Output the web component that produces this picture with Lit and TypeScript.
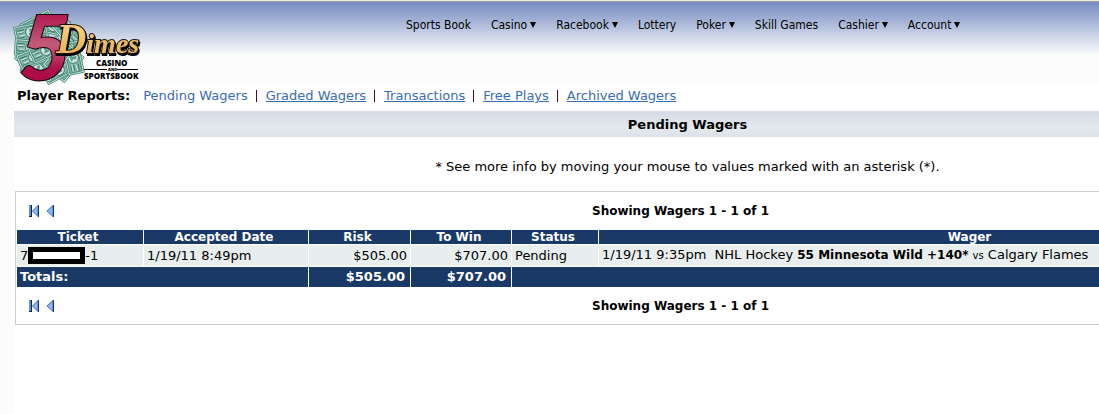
import { LitElement, html, css, svg } from "lit";
import { customElement } from "lit/decorators.js";

interface MenuEntry {
  label: string;
  menu: boolean;
}

interface ReportLink {
  label: string;
  current: boolean;
}

const MENU: MenuEntry[] = [
  { label: "Sports Book", menu: false },
  { label: "Casino", menu: true },
  { label: "Racebook", menu: true },
  { label: "Lottery", menu: false },
  { label: "Poker", menu: true },
  { label: "Skill Games", menu: false },
  { label: "Cashier", menu: true },
  { label: "Account", menu: true },
];

const REPORTS: ReportLink[] = [
  { label: "Pending Wagers", current: true },
  { label: "Graded Wagers", current: false },
  { label: "Transactions", current: false },
  { label: "Free Plays", current: false },
  { label: "Archived Wagers", current: false },
];

@customElement("site-logo")
export class SiteLogo extends LitElement {
  static styles = css`
    :host {
      display: block;
    }
    .logo {
      display: block;
      width: 128px;
      height: 72px;
      overflow: visible;
    }
    .five {
      font: italic 900 90px Lato, sans-serif;
    }
    .dimes {
      font: italic bold 28px "Liberation Serif", serif;
      filter: drop-shadow(1px 2px 0 #000);
    }
    .initial {
      font-size: 42px;
    }
    .caps {
      font: 800 8px "Open Sans", sans-serif;
    }
    .tiny {
      font: 800 4px "Open Sans", sans-serif;
    }
  `;

  private bill(x: number, y: number, angle: number) {
    return svg`<g transform="translate(${x} ${y}) rotate(${angle}) scale(0.9)">
      <rect x="-18" y="-9" width="36" height="18" fill="#d3e6de" stroke="#4c8f7f" stroke-width="1"/>
      <rect x="-16" y="-7" width="32" height="14" fill="#82b5a7" stroke="#3f8776" stroke-width="1"/>
      <path d="M-15 -4h8M-14 -1h6M-15 4h8M7 -4h8M8 1h6M7 4h8" stroke="#2f7565" stroke-width="1"/>
      <path d="M-15 -2h7M-13 2h6M8 -2h7M7 3h8" stroke="#d9ebe4" stroke-width="1"/>
      <ellipse rx="6" ry="6" fill="#cfe3dc" stroke="#357c6c" stroke-width="1"/>
      <path d="M-3 3q0-3 2-3q-2-4 1-4q3 0 1 4q2 0 2 3z" fill="#5b9a8b"/>
    </g>`;
  }

  render() {
    return html`<svg class="logo" viewBox="0 0 128 72" role="img" aria-label="5 Dimes Casino and Sportsbook">
      <defs>
        <linearGradient id="red" x1="0" y1="0" x2="0" y2="1">
          <stop offset="0.15" stop-color="#ad0b46" />
          <stop offset="0.5" stop-color="#c35b78" />
          <stop offset="0.72" stop-color="#b01048" />
          <stop offset="1" stop-color="#a60640" />
        </linearGradient>
        <linearGradient id="gold" x1="0" y1="0" x2="0" y2="1">
          <stop offset="0" stop-color="#f9d88c" />
          <stop offset="1" stop-color="#e2ac50" />
        </linearGradient>
      </defs>
      ${this.bill(25, 12, -28)} ${this.bill(40, 14, 12)} ${this.bill(54, 20, 48)}
      ${this.bill(18, 20, -12)} ${this.bill(55, 53, -52)} ${this.bill(46, 58, -28)}
      ${this.bill(19, 50, 38)} ${this.bill(25, 57, 20)} ${this.bill(18, 36, 4)}
      ${this.bill(60, 46, 78)} ${this.bill(21, 45, -22)} ${this.bill(46, 45, -52)} ${this.bill(33, 38, -25)}
      <text class="five" x="6" y="68" fill="url(#red)" stroke="#100509" stroke-width="2" paint-order="stroke">5</text>
      <text class="dimes" x="43" y="41" fill="url(#gold)" stroke="#1b1206" stroke-width="2" paint-order="stroke"><tspan class="initial">D</tspan>imes</text>
      <text class="caps" x="83" y="54" fill="#000">CASINO</text>
      <path d="M71 57.5h23M104 57.5h21" stroke="#000" stroke-width="1" />
      <text class="tiny" x="95" y="59">AND</text>
      <text class="caps" x="71" y="67" fill="#000">SPORTSBOOK</text>
    </svg>`;
  }
}

@customElement("wager-pager")
export class WagerPager extends LitElement {
  static styles = css`
    :host {
      display: grid;
      grid-template-columns: 1fr auto 1fr;
      align-items: center;
      height: 36px;
    }
    .buttons {
      display: flex;
      gap: 7px;
      padding-left: 12px;
    }
    .button {
      display: block;
      padding: 0;
      border: 0;
      background: none;
    }
    .glyph {
      display: block;
    }
    .count {
      font-weight: bold;
      font-size: 12px;
      line-height: 16px;
    }
  `;

  render() {
    return html`
      <div class="buttons">
        <button class="button" aria-label="First page">
          <svg class="glyph" width="11" height="12" viewBox="0 0 11 12">
            <rect x="1" y="0" width="3" height="12" fill="#5b8ee0" />
            <path d="M3.5 0v11M1 11.5h3" stroke="#10233f" stroke-width="1" />
            <path d="M10 0.500v11L4.500 6z" fill="#8fb6f2" stroke="#3f6fc4" stroke-width="1" />
            <path d="M10.500 0v12" stroke="#1a3a73" stroke-width="1" />
          </svg>
        </button>
        <button class="button" aria-label="Previous page">
          <svg class="glyph" width="8" height="12" viewBox="0 0 8 12">
            <path d="M7 0.500v11L1 6z" fill="#8fb6f2" stroke="#3f6fc4" stroke-width="1" />
            <path d="M7.500 0v12" stroke="#1a3a73" stroke-width="1" />
          </svg>
        </button>
      </div>
      <div class="count">Showing Wagers 1 - 1 of 1</div>
    `;
  }
}

@customElement("app-root")
export class AppRoot extends LitElement {
  static styles = css`
    :host {
      display: block;
      box-sizing: border-box;
      min-height: 100vh;
      overflow: hidden;
      background: #fcfcfc;
      color: #000;
      font: 13px/16px Verdana, "DejaVu Sans", sans-serif;
    }
    .header {
      display: flex;
      align-items: flex-start;
      height: 84px;
      box-sizing: border-box;
      border-top: 1px solid #ece9e6;
      background: linear-gradient(#9a9f9f 1px, #788bc0 1px, #a5b3d6 20px, #d4dbeb 38px, #fcfcfc 54px);
    }
    .logo {
      margin: 11px 0 0 13px;
    }
    .menu {
      display: flex;
      gap: 20px;
      margin: 16px 0 0 265px;
      font: 12px/16px Tahoma, "DejaVu Sans Condensed", "Noto Sans", sans-serif;
    }
    .item {
      display: flex;
      align-items: center;
      gap: 3px;
      color: #000;
      text-decoration: none;
      white-space: nowrap;
    }
    .content {
      min-width: 1347px;
      min-height: calc(100vh - 84px);
      margin-left: 14px;
      background: #fff;
    }
    .reports {
      display: flex;
      align-items: center;
      height: 27px;
      box-sizing: border-box;
      padding: 0 3px 3px;
      white-space: nowrap;
    }
    .label {
      margin-right: 13px;
      font-weight: bold;
    }
    .link {
      color: #3a6cb4;
    }
    .current {
      text-decoration: none;
    }
    .bar {
      width: 1px;
      height: 12px;
      margin: 0 9px 0 8px;
      background: #3c0a30;
    }
    .title {
      margin: 0;
      padding: 6px 0 4px;
      background: linear-gradient(#d5dae8, #e4e9ec 65%, #dce2ea);
      text-align: center;
      font-size: 13px;
      line-height: 16px;
    }
    .note {
      margin: 0;
      padding: 22px 0 16px;
      text-align: center;
    }
    .panel {
      margin: 0 15px 0 1px;
      padding-top: 1px;
      border: 1px solid #ccc;
    }
    .wagers {
      width: 100%;
      table-layout: fixed;
      border-collapse: separate;
      border-spacing: 1px;
    }
    .ticket {
      width: 126px;
    }
    .date {
      width: 164px;
    }
    .money {
      width: 101px;
    }
    .win {
      width: 100px;
    }
    .status {
      width: 86px;
    }
    .head {
      padding: 0 8px 0 4px;
      background: #1a3967;
      color: #fff;
      font-size: 12px;
      line-height: 14px;
    }
    .cell {
      height: 20px;
      padding: 0 3px;
      background: #e8eeee;
      line-height: 20px;
      white-space: nowrap;
      text-align: left;
    }
    .total {
      padding: 0 3px;
      background: #1a3967;
      color: #fff;
      font-weight: bold;
      line-height: 20px;
      text-align: left;
    }
    .amount {
      text-align: right;
    }
    .total.amount {
      padding-right: 5px;
    }
    .number {
      display: flex;
      align-items: center;
    }
    .mask {
      width: 57px;
      height: 17px;
      box-sizing: border-box;
      border: 5px solid #000;
      background: #fff;
    }
    .pick {
      font-size: 12px;
    }
    .versus {
      font-size: 10px;
    }
  `;

  render() {
    return html`
      <header class="header">
        <site-logo class="logo"></site-logo>
        <nav class="menu">
          ${MENU.map(
            (entry) => html`<a class="item" href="#">${entry.label}${entry.menu
              ? html`<svg width="6" height="6" viewBox="0 0 6 6"><path d="M0 0h6L3 6z" /></svg>`
              : null}</a>`
          )}
        </nav>
      </header>
      <main class="content">
        <nav class="reports">
          <span class="label">Player Reports:</span>
          ${REPORTS.map(
            (report, index) => html`${index ? html`<span class="bar"></span>` : null}<a
                class="link ${report.current ? "current" : ""}"
                href="#"
                >${report.label}</a
              >`
          )}
        </nav>
        <h1 class="title">Pending Wagers</h1>
        <p class="note">* See more info by moving your mouse to values marked with an asterisk (*).</p>
        <section class="panel">
          <wager-pager></wager-pager>
          <table class="wagers">
            <colgroup>
              <col class="ticket" />
              <col class="date" />
              <col class="money" />
              <col class="win" />
              <col class="status" />
              <col />
            </colgroup>
            <thead>
              <tr>
                <th class="head">Ticket</th>
                <th class="head">Accepted Date</th>
                <th class="head">Risk</th>
                <th class="head">To Win</th>
                <th class="head">Status</th>
                <th class="head">Wager</th>
              </tr>
            </thead>
            <tbody>
              <tr>
                <td class="cell"><div class="number">7<span class="mask"></span>-1</div></td>
                <td class="cell">1/19/11 8:49pm</td>
                <td class="cell amount">$505.00</td>
                <td class="cell amount">$707.00</td>
                <td class="cell">Pending</td>
                <td class="cell">1/19/11 9:35pm&nbsp; NHL Hockey <b class="pick">55 Minnesota Wild +140*</b> <span class="versus">vs</span> Calgary Flames</td>
              </tr>
            </tbody>
            <tfoot>
              <tr>
                <th class="total" colspan="2">Totals:</th>
                <td class="total amount">$505.00</td>
                <td class="total amount">$707.00</td>
                <td class="total" colspan="2"></td>
              </tr>
            </tfoot>
          </table>
          <wager-pager></wager-pager>
        </section>
      </main>
    `;
  }
}
